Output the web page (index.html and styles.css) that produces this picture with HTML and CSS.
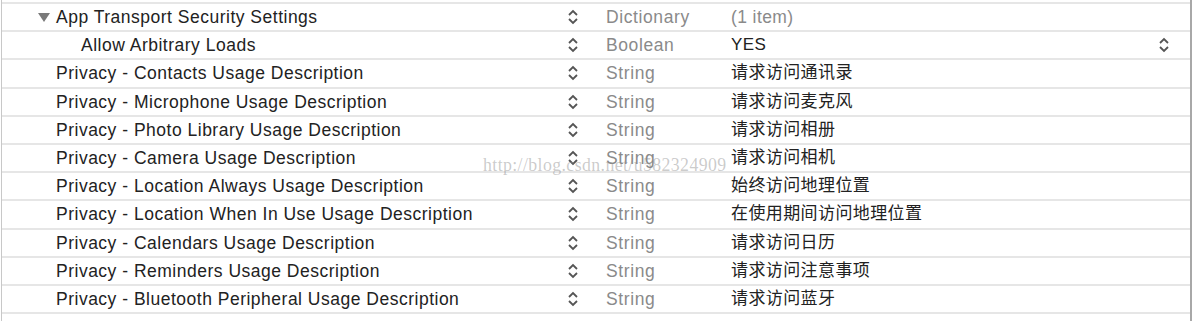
FILE: index.html
```html
<!DOCTYPE html>
<html>
<head>
<meta charset="utf-8">
<link rel="stylesheet" href="styles.css">
</head>
<body>
<div class="plist">
  <div class="row">
    <div class="key lvl0"><svg class="disc" width="12" height="9" viewBox="0 0 12 9"><polygon points="0,0 12,0 6,9" fill="#7a7a7a"/></svg>App Transport Security Settings</div>
    <div class="step"><svg width="12" height="18" viewBox="0 0 12 18"><path d="M2 7 L6 3 L10 7 M2 11 L6 15 L10 11" fill="none" stroke="#555" stroke-width="1.8"/></svg></div>
    <div class="type">Dictionary</div>
    <div class="val muted">(1 item)</div>
    <div class="step2"></div>
  </div>
  <div class="row">
    <div class="key lvl1">Allow Arbitrary Loads</div>
    <div class="step"><svg width="12" height="18" viewBox="0 0 12 18"><path d="M2 7 L6 3 L10 7 M2 11 L6 15 L10 11" fill="none" stroke="#555" stroke-width="1.8"/></svg></div>
    <div class="type">Boolean</div>
    <div class="val">YES</div>
    <div class="step2"><svg width="12" height="18" viewBox="0 0 12 18"><path d="M2 7 L6 3 L10 7 M2 11 L6 15 L10 11" fill="none" stroke="#555" stroke-width="1.8"/></svg></div>
  </div>
  <div class="row">
    <div class="key">Privacy - Contacts Usage Description</div>
    <div class="step"><svg width="12" height="18" viewBox="0 0 12 18"><path d="M2 7 L6 3 L10 7 M2 11 L6 15 L10 11" fill="none" stroke="#555" stroke-width="1.8"/></svg></div>
    <div class="type">String</div>
    <div class="val">请求访问通讯录</div>
    <div class="step2"></div>
  </div>
  <div class="row">
    <div class="key">Privacy - Microphone Usage Description</div>
    <div class="step"><svg width="12" height="18" viewBox="0 0 12 18"><path d="M2 7 L6 3 L10 7 M2 11 L6 15 L10 11" fill="none" stroke="#555" stroke-width="1.8"/></svg></div>
    <div class="type">String</div>
    <div class="val">请求访问麦克风</div>
    <div class="step2"></div>
  </div>
  <div class="row">
    <div class="key">Privacy - Photo Library Usage Description</div>
    <div class="step"><svg width="12" height="18" viewBox="0 0 12 18"><path d="M2 7 L6 3 L10 7 M2 11 L6 15 L10 11" fill="none" stroke="#555" stroke-width="1.8"/></svg></div>
    <div class="type">String</div>
    <div class="val">请求访问相册</div>
    <div class="step2"></div>
  </div>
  <div class="row">
    <div class="key">Privacy - Camera Usage Description</div>
    <div class="step"><svg width="12" height="18" viewBox="0 0 12 18"><path d="M2 7 L6 3 L10 7 M2 11 L6 15 L10 11" fill="none" stroke="#555" stroke-width="1.8"/></svg></div>
    <div class="type">String</div>
    <div class="val">请求访问相机</div>
    <div class="step2"></div>
  </div>
  <div class="row">
    <div class="key">Privacy - Location Always Usage Description</div>
    <div class="step"><svg width="12" height="18" viewBox="0 0 12 18"><path d="M2 7 L6 3 L10 7 M2 11 L6 15 L10 11" fill="none" stroke="#555" stroke-width="1.8"/></svg></div>
    <div class="type">String</div>
    <div class="val">始终访问地理位置</div>
    <div class="step2"></div>
  </div>
  <div class="row">
    <div class="key">Privacy - Location When In Use Usage Description</div>
    <div class="step"><svg width="12" height="18" viewBox="0 0 12 18"><path d="M2 7 L6 3 L10 7 M2 11 L6 15 L10 11" fill="none" stroke="#555" stroke-width="1.8"/></svg></div>
    <div class="type">String</div>
    <div class="val">在使用期间访问地理位置</div>
    <div class="step2"></div>
  </div>
  <div class="row">
    <div class="key">Privacy - Calendars Usage Description</div>
    <div class="step"><svg width="12" height="18" viewBox="0 0 12 18"><path d="M2 7 L6 3 L10 7 M2 11 L6 15 L10 11" fill="none" stroke="#555" stroke-width="1.8"/></svg></div>
    <div class="type">String</div>
    <div class="val">请求访问日历</div>
    <div class="step2"></div>
  </div>
  <div class="row">
    <div class="key">Privacy - Reminders Usage Description</div>
    <div class="step"><svg width="12" height="18" viewBox="0 0 12 18"><path d="M2 7 L6 3 L10 7 M2 11 L6 15 L10 11" fill="none" stroke="#555" stroke-width="1.8"/></svg></div>
    <div class="type">String</div>
    <div class="val">请求访问注意事项</div>
    <div class="step2"></div>
  </div>
  <div class="row">
    <div class="key">Privacy - Bluetooth Peripheral Usage Description</div>
    <div class="step"><svg width="12" height="18" viewBox="0 0 12 18"><path d="M2 7 L6 3 L10 7 M2 11 L6 15 L10 11" fill="none" stroke="#555" stroke-width="1.8"/></svg></div>
    <div class="type">String</div>
    <div class="val">请求访问蓝牙</div>
    <div class="step2"></div>
  </div>
  <div class="row last"></div>
  <div class="watermark">http://blog.csdn.net/u582324909</div>
</div>
</body>
</html>
```
FILE: styles.css
```css
html, body {
  margin: 0;
  padding: 0;
  background: #fff;
}
.plist {
  position: relative;
  width: 1191px;
  height: 321px;
  margin-left: 1px;
  padding-top: 2px;
  box-sizing: border-box;
  border-left: 1px solid #c8c8c8;
  border-right: 2px solid #a8a8a8;
  font-family: "Liberation Sans", Arial, "Noto Sans CJK SC", sans-serif;
  font-size: 17.5px;
  color: #222;
  overflow: hidden;
}
.row {
  display: grid;
  grid-template-columns: 560px 44px 125px 1fr 32px;
  align-items: center;
  height: 26.2px;
  border-top: 2px solid #e6e6e6;
  white-space: nowrap;
  line-height: 24px;
}
.row.last {
  height: 0;
}
.key {
  padding-left: 54px;
  display: flex;
  align-items: center;
  letter-spacing: 0.5px;
}
.key.lvl0 {
  padding-left: 36px;
}
.key.lvl1 {
  padding-left: 79px;
}
.disc {
  margin-right: 6px;
}
.step, .step2 {
  display: flex;
  align-items: center;
  height: 100%;
}
.step svg {
  margin-left: 5px;
}
.type {
  color: #8a8a8a;
  letter-spacing: 0.6px;
}
.val {
  font-size: 17px;
  letter-spacing: 0.4px;
}
.val.muted {
  color: #8a8a8a;
  font-size: 17.5px;
}
.watermark {
  position: absolute;
  left: 481px;
  top: 155px;
  font-family: "Liberation Serif", "Times New Roman", serif;
  font-size: 17.8px;
  color: rgba(140, 140, 140, 0.45);
  letter-spacing: 0.4px;
  pointer-events: none;
}
```
